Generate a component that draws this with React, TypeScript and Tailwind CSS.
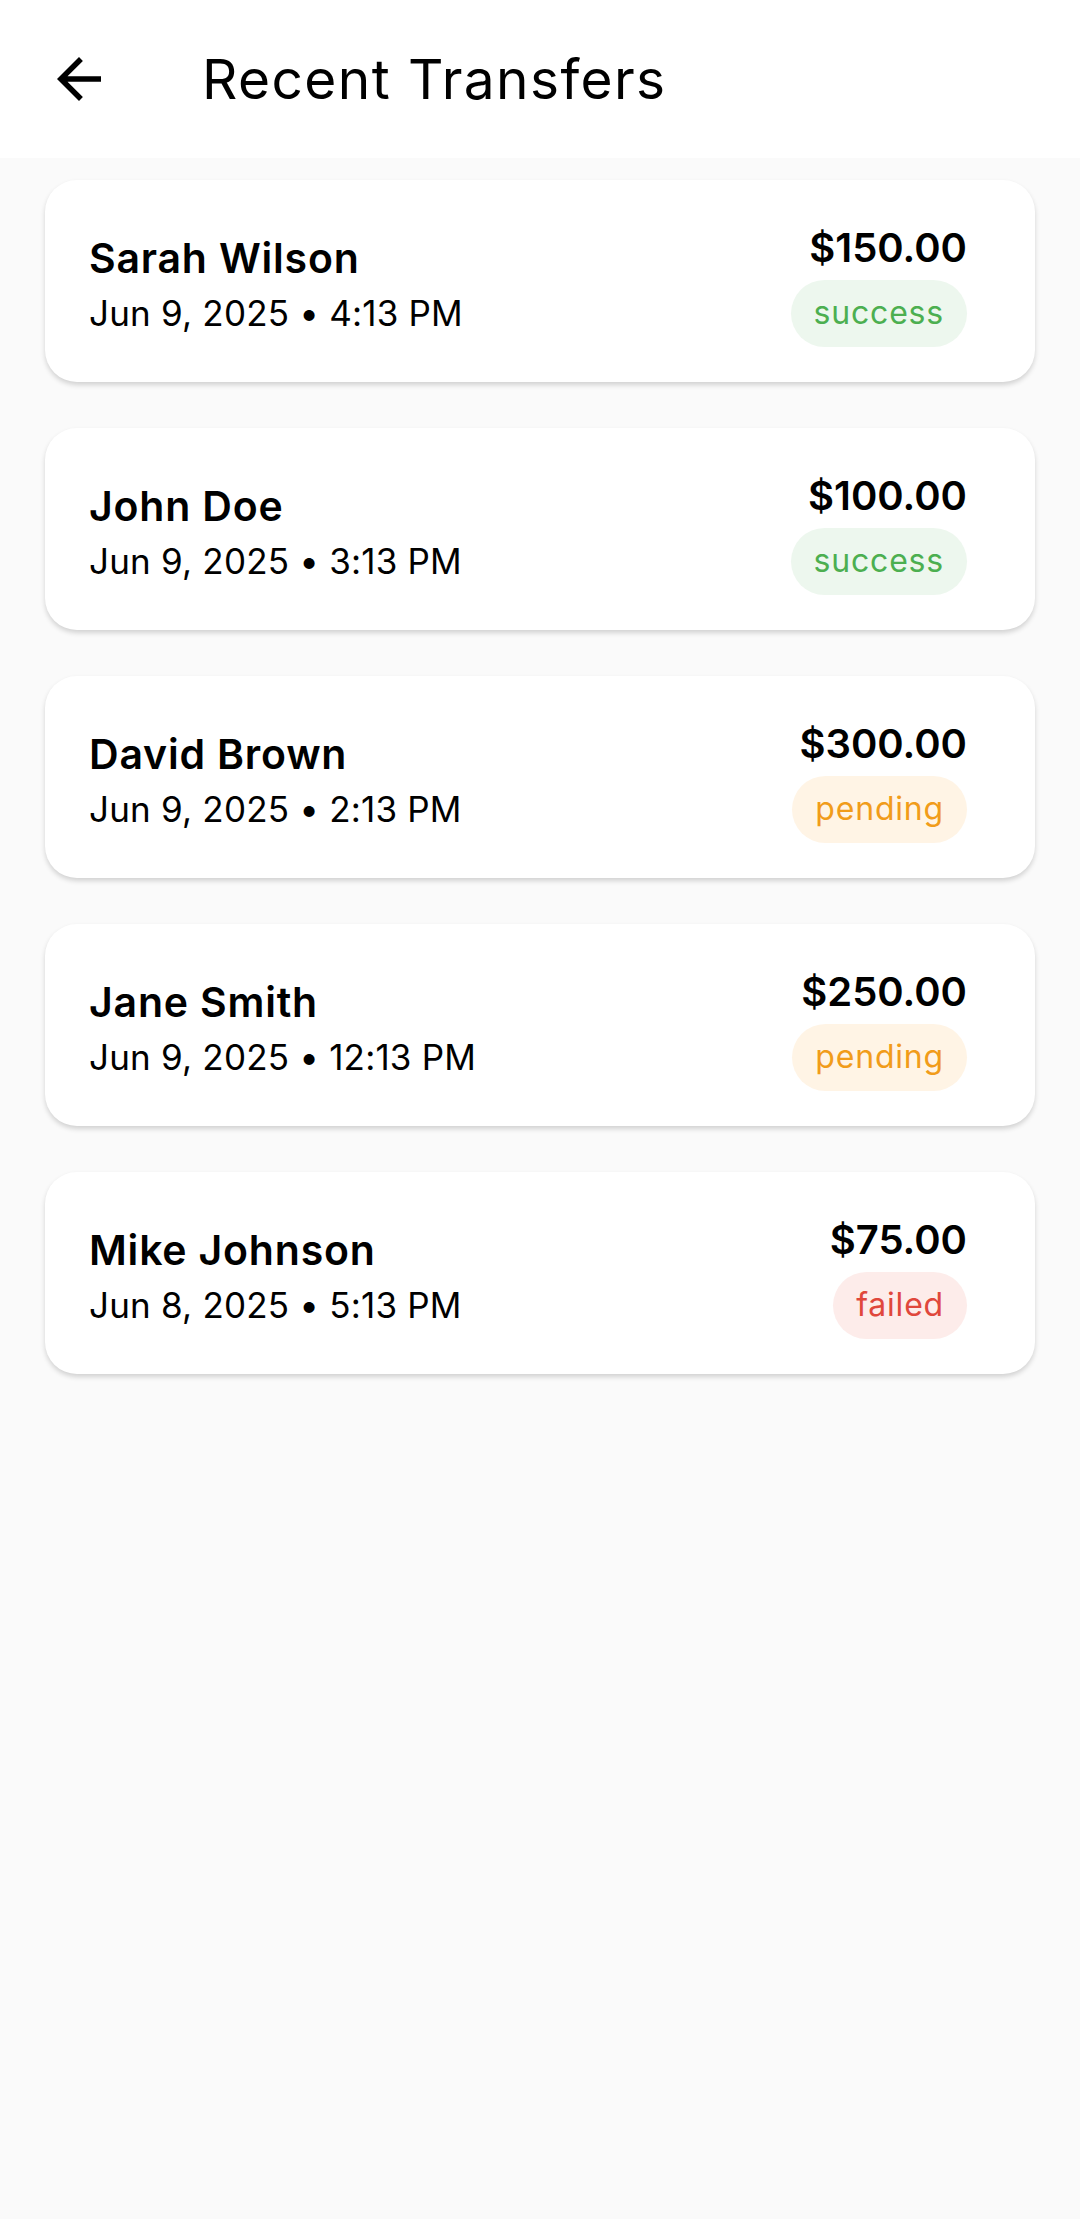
import * as React from 'react';

type Status = 'success' | 'pending' | 'failed';

interface Transfer {
  name: string;
  date: string;
  amount: string;
  status: Status;
}

const transfers: Transfer[] = [
  { name: 'Sarah Wilson', date: 'Jun 9, 2025 • 4:13 PM', amount: '$150.00', status: 'success' },
  { name: 'John Doe', date: 'Jun 9, 2025 • 3:13 PM', amount: '$100.00', status: 'success' },
  { name: 'David Brown', date: 'Jun 9, 2025 • 2:13 PM', amount: '$300.00', status: 'pending' },
  { name: 'Jane Smith', date: 'Jun 9, 2025 • 12:13 PM', amount: '$250.00', status: 'pending' },
  { name: 'Mike Johnson', date: 'Jun 8, 2025 • 5:13 PM', amount: '$75.00', status: 'failed' },
];

const badgeStyles: Record<Status, string> = {
  success: 'bg-[#edf7ee] text-[#4caf50]',
  pending: 'bg-[#fff4e5] text-[#f19c1a]',
  failed: 'bg-[#fdecea] text-[#e0473c]',
};

function BackIcon() {
  return (
    <svg width="66" height="66" viewBox="0 0 24 24" fill="#000">
      <path d="M20 11H7.83l5.59-5.59L12 4l-8 8 8 8 1.41-1.41L7.83 13H20v-2z" />
    </svg>
  );
}

function TransferCard({ t }: { t: Transfer }) {
  return (
    <div className="h-[202px] rounded-[32px] bg-white shadow-[0_3px_5px_rgba(0,0,0,0.16)] flex items-center justify-between pl-[44px] pr-[68px]">
      <div className="flex flex-col pt-[14px]">
        <div className="text-[41px] leading-[51px] font-semibold tracking-[0.8px] text-black">{t.name}</div>
        <div className="text-[35px] leading-[59px] tracking-[0.2px] text-black">{t.date}</div>
      </div>
      <div className="flex flex-col items-end pt-[8px]">
        <div className="text-[40px] leading-[48px] font-semibold text-black">{t.amount}</div>
        <div
          className={`mt-[8px] h-[67px] rounded-full px-[23px] flex items-center text-[32px] tracking-[0.8px] ${badgeStyles[t.status]}`}
        >
          {t.status}
        </div>
      </div>
    </div>
  );
}

export default function App() {
  return (
    <div className="min-h-[2219px] bg-[#fafafa] font-['Inter','Noto_Sans',sans-serif]">
      <header className="h-[158px] bg-white flex items-center pl-[46px]">
        <BackIcon />
        <h1 className="ml-[90px] text-[55px] leading-none tracking-[1.4px] text-black font-normal">Recent Transfers</h1>
      </header>
      <main className="flex flex-col gap-[46px] pt-[22px] px-[45px]">
        {transfers.map((t) => (
          <TransferCard key={t.name} t={t} />
        ))}
      </main>
    </div>
  );
}
